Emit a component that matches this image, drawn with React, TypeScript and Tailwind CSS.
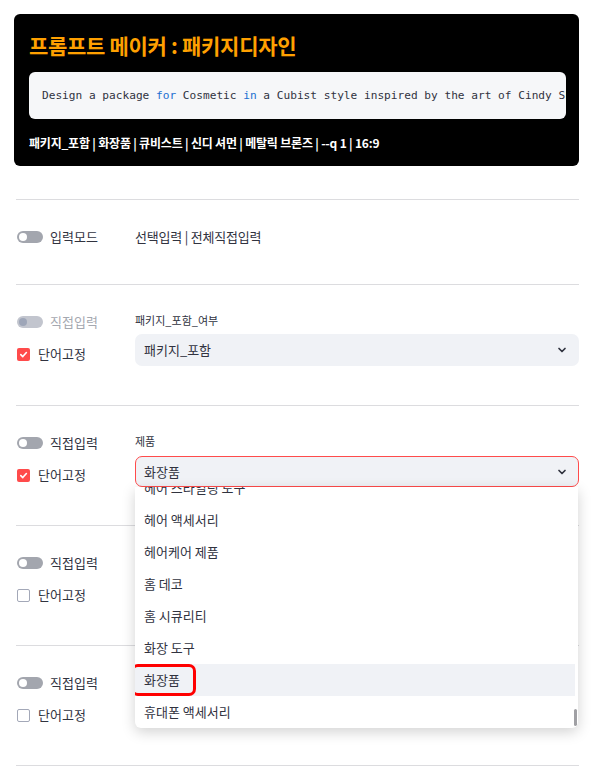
import React from "react";

const kr = "font-['Source_Sans_Pro','Noto_Sans_CJK_KR',sans-serif]";

function Toggle({ disabled = false }: { disabled?: boolean }) {
  return (
    <span
      className={`relative inline-flex h-[12px] w-[26px] items-center rounded-full ${
        disabled ? "bg-[#c2c5ce]" : "bg-[#a3a6ae]"
      }`}
    >
      <span
        className={`ml-[2px] h-[8px] w-[8px] rounded-full ${disabled ? "bg-[#9ea6b8]" : "bg-white"}`}
      />
    </span>
  );
}

function Checkbox({ checked }: { checked: boolean }) {
  if (checked) {
    return (
      <span className="flex h-[13px] w-[13px] items-center justify-center rounded-[2px] bg-[#ff4b4b]">
        <svg width="9" height="9" viewBox="0 0 10 10">
          <path d="M2 5.2 L4.2 7.3 L8.2 2.8" fill="none" stroke="white" strokeWidth="1.8" strokeLinecap="round" strokeLinejoin="round" />
        </svg>
      </span>
    );
  }
  return <span className="h-[13px] w-[13px] rounded-[2px] border border-[#a3a8b8] bg-white" />;
}

function Chevron() {
  return (
    <svg width="10" height="10" viewBox="0 0 10 10">
      <path d="M2 3.5 L5 6.5 L8 3.5" fill="none" stroke="#31333f" strokeWidth="1.7" strokeLinecap="round" strokeLinejoin="round" />
    </svg>
  );
}

function LeftControls({ disabled = false, checked }: { disabled?: boolean; checked: boolean }) {
  return (
    <div className="w-[119px] shrink-0">
      <div className="flex h-[20px] items-center gap-[7px] pl-[1px]">
        <Toggle disabled={disabled} />
        <span className={`text-[13px] leading-[20px] ${disabled ? "text-[#a5a8b0]" : "text-[#31333f]"}`}>직접입력</span>
      </div>
      <div className="mt-[12px] flex h-[20px] items-center gap-[8px] pl-[1px]">
        <Checkbox checked={checked} />
        <span className="text-[13px] leading-[20px] text-[#31333f]">단어고정</span>
      </div>
    </div>
  );
}

const options = [
  "헤어 스타일링 도구",
  "헤어 액세서리",
  "헤어케어 제품",
  "홈 데코",
  "홈 시큐리티",
  "화장 도구",
  "화장품",
  "휴대폰 액세서리",
];

export default function App() {
  return (
    <div className={`w-[598px] min-h-[782px] bg-white pt-[14px] ${kr} text-[#31333f]`}>
      {/* 상단 결과 카드 */}
      <div className="mx-[14px] w-[565px] rounded-[6px] bg-black pb-[15px] pl-[15px] pr-[13px] pt-[17px]">
        <h1 className="text-[21px] font-bold leading-[28px] tracking-[-0.3px] text-[#ffa000]">
          프롬프트 메이커 : 패키지디자인
        </h1>
        <div className="mt-[13px] flex h-[47px] items-center overflow-hidden rounded-[6px] bg-[#f6f7f9]">
          <pre className="whitespace-pre pl-[13px] font-['DejaVu_Sans_Mono',monospace] text-[11.15px] leading-[16px] text-[#31333f]">
            Design a package <span className="text-[#1c6fd0]">for</span> Cosmetic <span className="text-[#1c6fd0]">in</span> a Cubist style inspired by the art of Cindy Sherman, metallic bronze --q 1 --ar 16:9
          </pre>
        </div>
        <p className="mt-[16px] text-[12px] font-bold leading-[16px] tracking-[-0.2px] text-white">
          패키지_포함 | 화장품 | 큐비스트 | 신디 셔먼 | 메탈릭 브론즈 | --q 1 | 16:9
        </p>
      </div>

      <div className="mx-[16px] mt-[33px] w-[563px]">
        {/* 입력모드 */}
        <section className="h-[85px] border-t border-[#dcdcdf] pt-[27px]">
          <div className="flex h-[20px] items-center">
            <div className="flex w-[119px] shrink-0 items-center gap-[7px] pl-[1px]">
              <Toggle />
              <span className="text-[13px] leading-[20px]">입력모드</span>
            </div>
            <span className="text-[13px] leading-[20px] tracking-[-0.2px]">선택입력 | 전체직접입력</span>
          </div>
        </section>

        {/* 패키지_포함_여부 */}
        <section className="flex h-[121px] border-t border-[#dcdcdf] pt-[27px]">
          <LeftControls disabled checked />
          <div className="flex-1">
            <div className="text-[11px] leading-[16px]">패키지_포함_여부</div>
            <div className="mt-[6px] flex h-[32px] items-center justify-between rounded-[7px] bg-[#f0f2f6] pl-[9px] pr-[12px]">
              <span className="text-[13px]">패키지_포함</span>
              <Chevron />
            </div>
          </div>
        </section>

        {/* 제품 */}
        <section className="relative z-10 flex h-[120px] border-t border-[#dcdcdf] pt-[27px]">
          <LeftControls checked />
          <div className="relative flex-1">
            <div className="text-[11px] leading-[16px]">제품</div>
            <div className="mt-[7px] flex h-[31px] items-center justify-between rounded-[7px] border border-[#ff4b4b] bg-[#f0f2f6] pl-[8px] pr-[11px]">
              <span className="text-[13px]">화장품</span>
              <Chevron />
            </div>
            <div className="absolute left-0 right-[1px] top-[54px] h-[241px] overflow-hidden rounded-b-[6px] bg-white shadow-[0_4px_14px_rgba(0,0,0,0.18)]">
              <div className="-mt-[15px]">
                {options.map((o) => (
                  <div
                    key={o}
                    className={`relative flex h-[32px] w-[440px] items-center pl-[9px] text-[13px] ${
                      o === "화장품" ? "bg-[#f0f2f6]" : ""
                    }`}
                  >
                    {o}
                    {o === "화장품" && (
                      <span className="absolute left-[-4px] top-0 h-[32px] w-[65px] rounded-[7px] border-[3px] border-[#ff0000]" />
                    )}
                  </div>
                ))}
              </div>
              <div className="absolute bottom-[2px] right-[1px] h-[17px] w-[3px] rounded-full bg-[#a0a0a4]" />
            </div>
          </div>
        </section>

        <section className="flex h-[120px] border-t border-[#dcdcdf] pt-[27px]">
          <LeftControls checked={false} />
        </section>

        <section className="flex h-[120px] border-t border-[#dcdcdf] pt-[27px]">
          <LeftControls checked={false} />
        </section>

        <div className="border-t border-[#dcdcdf]" />
      </div>
    </div>
  );
}
